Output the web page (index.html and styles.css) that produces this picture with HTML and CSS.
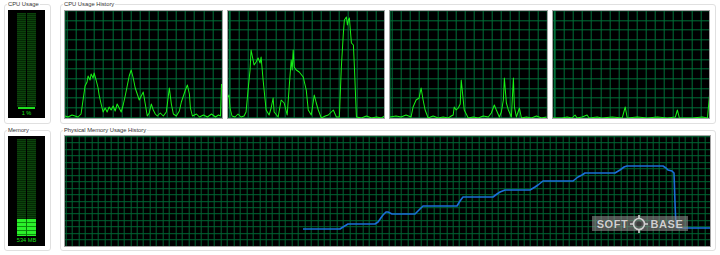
FILE: index.html
```html
<!DOCTYPE html>
<html>
<head>
<meta charset="utf-8">
<title>Performance</title>
<link rel="stylesheet" href="styles.css">
</head>
<body>
<div class="perf">
  <section class="group meter-group">
    <span class="caption">CPU Usage</span>
    <div class="meter">
      <div class="bar bar-cpu">
        <div class="dim"></div>
        <div class="fill fill-cpu"></div>
      </div>
      <div class="value">1 %</div>
    </div>
  </section>

  <section class="group hist-group hist-cpu">
    <span class="caption">CPU Usage History</span>
    <div class="graphs">
      <div class="graph cpu-grid">
        <svg viewBox="0 0 156 107" preserveAspectRatio="none"><polyline class="cpu-line" points="0,105 3,106 7,104 10,105 13,106 16,103 18,89 20,75 22,71 23,65 25,69 26,63 28,67 29,62 31,69 33,77 34,84 36,93 38,101 40,97 42,101 44,96 46,99 48,95 50,100 52,93 54,97 56,101 58,94 60,85 62,75 64,65 66,59 68,67 70,77 72,83 74,89 76,85 78,81 80,93 82,105 84,102 86,93 88,99 90,103 92,105 95,102 98,105 101,101 103,85 104,77 106,93 108,103 111,105 114,100 116,91 118,85 120,79 122,74 124,83 125,97 127,105 131,103 134,106 138,104 142,106 146,103 150,106 153,104 155,105 156,73"/></svg>
      </div>
      <div class="graph cpu-grid">
        <svg viewBox="0 0 156 107" preserveAspectRatio="none"><polyline class="cpu-line" points="0,86 1,84 2,97 4,105 7,106 10,103 13,106 16,105 18,101 20,79 22,59 23,39 25,49 26,54 28,51 30,47 32,52 33,46 35,69 36,79 38,99 41,104 43,97 45,87 46,101 50,106 53,89 56,92 59,104 61,76 63,49 64,59 65,39 66,56 68,59 71,61 75,66 78,79 80,99 83,104 86,84 88,92 90,99 93,107 97,105 100,104 103,101 105,99 108,106 111,106 113,56 115,22 116,9 118,6 119,14 120,9 121,7 123,32 125,34 126,56 128,106 133,107 138,105 143,107 148,106 153,107 156,105"/></svg>
      </div>
      <div class="graph cpu-grid">
        <svg viewBox="0 0 156 107" preserveAspectRatio="none"><polyline class="cpu-line" points="0,106 6,105 11,106 16,104 21,106 23,96 26,89 29,87 31,77 33,89 35,99 38,107 43,105 48,107 53,106 58,107 61,105 63,104 64,96 66,99 68,97 70,93 71,69 73,89 74,99 78,107 83,106 88,107 93,105 98,106 101,102 104,94 106,99 109,106 111,101 113,89 114,67 116,92 118,99 121,106 123,67 124,96 126,106 129,97 131,107 136,106 141,107 146,105 151,107 156,106"/></svg>
      </div>
      <div class="graph cpu-grid">
        <svg viewBox="0 0 156 107" preserveAspectRatio="none"><polyline class="cpu-line" points="0,107 9,107 14,106 19,107 22,104 24,107 29,106 34,104 36,107 44,106 49,107 59,106 69,107 72,96 74,107 84,106 94,107 104,106 114,107 122,106 124,99 126,107 139,107 149,106 154,107 156,84"/></svg>
      </div>
    </div>
  </section>

  <section class="group meter-group">
    <span class="caption">Memory</span>
    <div class="meter meter-mem">
      <div class="bar bar-mem">
        <div class="dim"></div>
        <div class="fill fill-mem"></div>
      </div>
      <div class="value">534 MB</div>
    </div>
  </section>

  <section class="group hist-group hist-mem">
    <span class="caption">Physical Memory Usage History</span>
    <div class="graph mem-grid">
      <svg viewBox="0 0 645 110" preserveAspectRatio="none"><polyline class="mem-line" points="238,93 275,93 278,91 283,88 310,88 313,86 318,79 321,76 323,76 327,78 350,78 354,74 358,70 392,70 395,65 398,61 428,61 432,58 435,56 440,54 465,54 470,51 473,49 478,45 508,45 513,41 517,39 520,37 550,37 555,34 559,31 562,30 598,30 601,32 603,34 607,35 609,37 610,67 611,91 613,92 646,92"/></svg>
    </div>
    <div class="watermark">
      <span>SOFT</span>
      <svg class="wm-icon" viewBox="0 0 20 20"><circle cx="10" cy="10" r="5.5" fill="none" stroke="#d0d0d0" stroke-width="1.6"/><circle cx="10" cy="10" r="2.6" fill="#3a3a3a"/><path d="M10 1v3M10 16v3M1 10h3M16 10h3" stroke="#d0d0d0" stroke-width="1.6"/></svg>
      <span>BASE</span>
    </div>
  </section>
</div>
</body>
</html>
```

FILE: styles.css
```css
html, body {
  margin: 0;
  padding: 0;
  background: #ffffff;
}

body {
  font-family: "Liberation Sans", Arial, sans-serif;
  width: 720px;
  height: 255px;
  overflow: hidden;
}

.perf {
  display: grid;
  grid-template-columns: 47px 656px;
  grid-template-rows: 120px 121px;
  column-gap: 9px;
  row-gap: 6px;
  padding: 4px 0 0 4px;
}

.group {
  position: relative;
  box-sizing: border-box;
  border: 1px solid #e0e0e0;
  border-radius: 3px;
  background: #ffffff;
}

.caption {
  position: absolute;
  top: -4px;
  left: 2px;
  padding: 0 1px;
  font-size: 5.8px;
  line-height: 7px;
  color: #333333;
  background: #ffffff;
  white-space: nowrap;
}

/* ---- meters ---- */
.meter-group {
  padding: 5px 0 0 3px;
}

.meter {
  box-sizing: border-box;
  width: 37px;
  height: 108px;
  padding-top: 3px;
  background: #000000;
  display: flex;
  flex-direction: column;
  align-items: center;
}

.meter-mem {
  height: 110px;
}

.bar {
  width: 19px;
  display: flex;
  flex-direction: column;
}

.bar-cpu {
  height: 96px;
}

.bar-mem {
  height: 97px;
}

.dim {
  flex: 1;
  background:
    linear-gradient(to right, transparent 9px, #000 9px 10px, transparent 10px),
    repeating-linear-gradient(to bottom, #0b440b 0 1px, #052805 1px 2px);
}

.fill {
  background:
    linear-gradient(to right, transparent 9px, #0a7a0a 9px 10px, transparent 10px),
    repeating-linear-gradient(to bottom, #2bf02b 0 3px, #0c900c 3px 4px);
}

.fill-cpu {
  height: 2px;
  margin: 0 1px;
  background: #1fe01f;
}

.fill-mem {
  height: 17px;
}

.value {
  font-size: 5.6px;
  line-height: 9px;
  color: #19e019;
  white-space: nowrap;
}

/* ---- history graphs ---- */
.hist-cpu {
  padding: 5px 5px 0 3px;
}

.hist-mem {
  padding: 4px 4px 0 3px;
}

.graphs {
  display: flex;
  gap: 4px;
  height: 109px;
}

.graph {
  box-sizing: border-box;
  border: 1px solid #a3a3a3;
  background-color: #000000;
}

.graphs .graph {
  flex: 1;
}

.graph svg {
  display: block;
  width: 100%;
  height: 100%;
}

.cpu-grid {
  background-image:
    repeating-linear-gradient(to right, rgb(0, 112, 56) 0 1px, transparent 1px 9.1px),
    repeating-linear-gradient(to bottom, rgb(0, 112, 56) 0 1px, transparent 1px 9.7px);
  background-position: 1.7px 0, 0 -0.7px;
}

.mem-grid {
  height: 112px;
  background-image:
    repeating-linear-gradient(to right, rgb(0, 100, 50) 0 1px, transparent 1px 6.45px),
    repeating-linear-gradient(to bottom, rgb(0, 100, 50) 0 1px, transparent 1px 6.45px);
  background-position: 0.7px 0, 0 0.2px;
}

.cpu-line {
  fill: none;
  stroke: #17f217;
  stroke-width: 1;
  vector-effect: non-scaling-stroke;
  stroke-linejoin: round;
}

.mem-line {
  fill: none;
  stroke: #1a6fd8;
  stroke-width: 1.6;
  vector-effect: non-scaling-stroke;
  stroke-linejoin: round;
}

/* ---- watermark overlay ---- */
.watermark {
  position: absolute;
  left: 531px;
  top: 85px;
  width: 96px;
  height: 15px;
  display: flex;
  align-items: center;
  justify-content: center;
  gap: 1px;
  background: rgba(140, 140, 140, 0.6);
  font-family: "Liberation Sans", Arial, sans-serif;
  font-weight: bold;
  font-size: 11px;
  letter-spacing: 0.6px;
  color: #cfcfcf;
  text-shadow: 0 0 1px #444, 0 0 1px #444;
}

.wm-icon {
  width: 20px;
  height: 20px;
  flex: none;
}
```
